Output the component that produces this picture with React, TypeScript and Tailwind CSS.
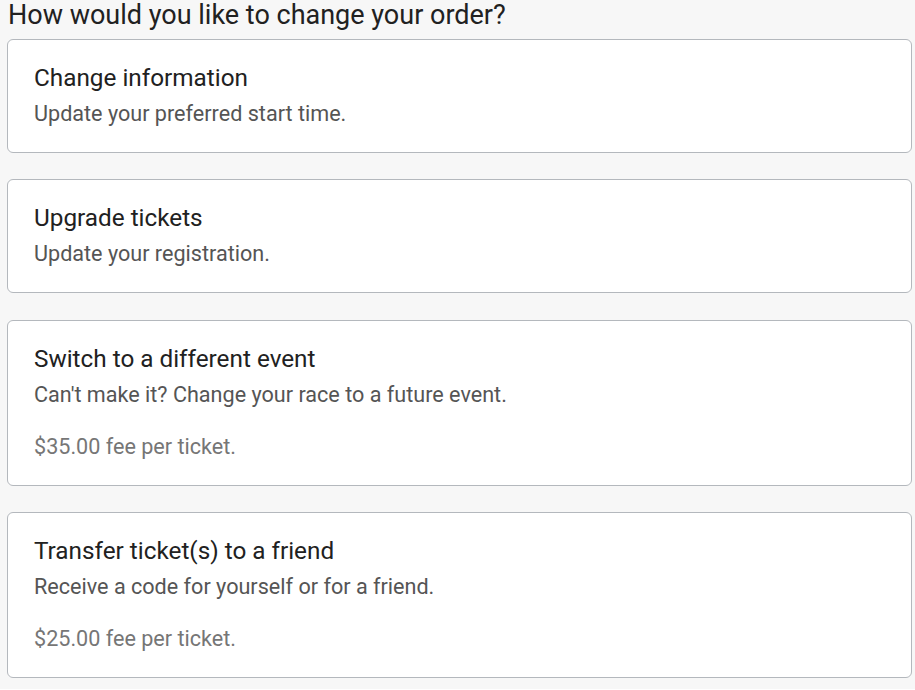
const options = [
  { title: 'Change information', desc: 'Update your preferred start time.' },
  { title: 'Upgrade tickets', desc: 'Update your registration.' },
  { title: 'Switch to a different event', desc: "Can't make it? Change your race to a future event.", fee: '$35.00 fee per ticket.' },
  { title: 'Transfer ticket(s) to a friend', desc: 'Receive a code for yourself or for a friend.', fee: '$25.00 fee per ticket.' },
];

export default function App() {
  return (
    <div className="min-h-[690px] bg-[#f7f7f7] px-[7px] font-['Roboto',sans-serif]">
      <h1 className="text-[27px] leading-[32px] text-[#212121] pl-px -mt-px">How would you like to change your order?</h1>
      <div className="mt-2 flex flex-col gap-[26.4px]">
        {options.map((o) => (
          <div key={o.title} className="w-[905px] bg-white border border-[#b4b8bd] rounded-[6px] pl-[26px] pr-6 py-6 cursor-pointer">
            <div className="text-[24.3px] leading-[28px] text-[#212121]">{o.title}</div>
            <div className="text-[21.6px] leading-[28px] text-[#555555] mt-2">{o.desc}</div>
            {o.fee && <div className="text-[21.6px] leading-[28px] text-[#767676] mt-6">{o.fee}</div>}
          </div>
        ))}
      </div>
    </div>
  );
}
